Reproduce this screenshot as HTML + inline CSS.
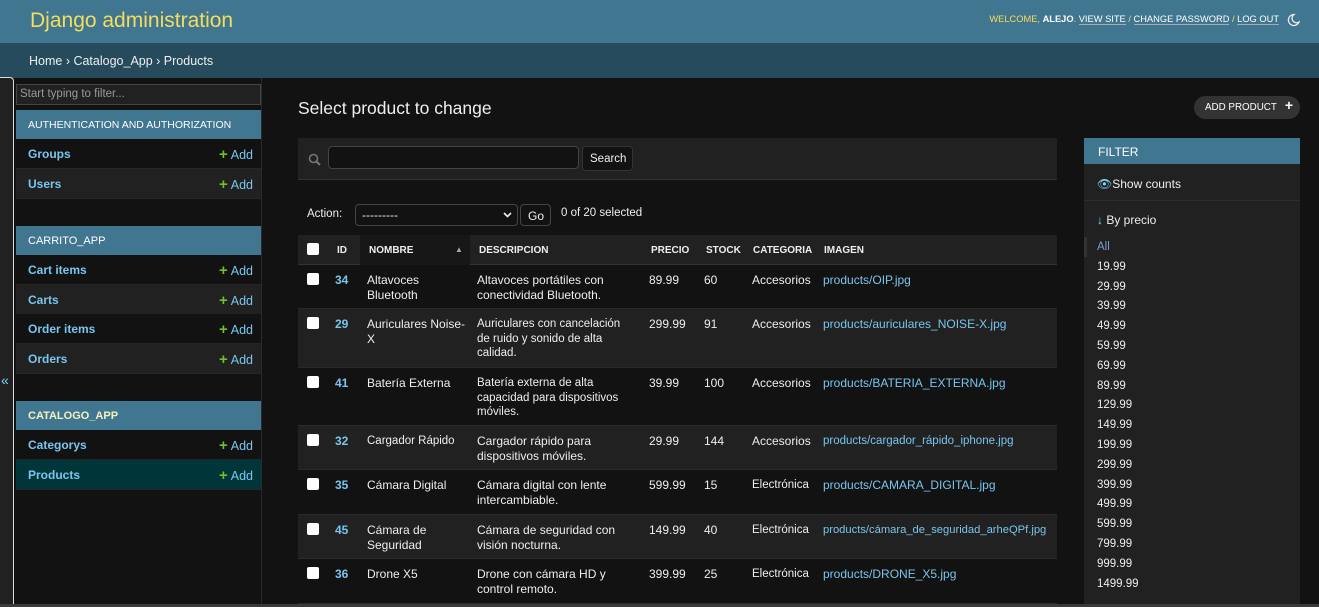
<!DOCTYPE html>
<html><head><meta charset="utf-8"><style>
*{box-sizing:border-box;margin:0;padding:0}
body{width:1319px;height:607px;overflow:hidden;background:#121212;color:#eee;font-family:"Liberation Sans",sans-serif;font-size:13px;position:relative}
.a{position:absolute;white-space:nowrap}
a,.lk{color:#79c5ee;text-decoration:none}
#hdr{left:0;top:0;width:1319px;height:43px;background:#417690}
#bc{left:0;top:43px;width:1319px;height:35px;background:#264b5d;color:#eee;font-size:12.5px;padding:11px 29px}
.cap{background:#417690;color:#fff;font-size:11px;padding:9px 12px;height:29px;width:245px;left:16px}
.mr{left:16px;width:245px;height:30px;padding:8px 12px;font-weight:bold;font-size:12px;border-bottom:1px solid #262626}
.mr .ad{position:absolute;right:8px;top:7px;font-weight:normal;color:#79c5ee;font-size:12.5px}
.mr .ad b{color:#70bf2b;font-size:15px;margin-right:3px}
.th{font-size:10px;font-weight:bold;color:#eee}
.row{left:298px;width:759px;border-bottom:1px solid #2a2a2a}
.cb{width:12px;height:12px;background:#fff;border-radius:2px}
.c{position:absolute;top:8px;line-height:14.5px;font-size:12px}
.fl{left:1097px;font-size:11.5px;color:#eee}
</style></head><body>
<div id="hdr" class="a">
 <div class="a" style="left:30px;top:9px;font-size:21px;color:#f5dd5d">Django administration</div>
 <div class="a" style="right:40px;top:14px;font-size:9.3px;color:#f5dd5d">WELCOME, <b style="color:#fff">ALEJO</b>. <span style="color:#fff;border-bottom:1px solid #aaa">VIEW SITE</span> / <span style="color:#fff;border-bottom:1px solid #aaa">CHANGE PASSWORD</span> / <span style="color:#fff;border-bottom:1px solid #aaa">LOG OUT</span></div>
 <svg class="a" style="left:1287px;top:13px" width="13" height="14" viewBox="0 0 13 14"><path d="M7 1.5A5.5 5.5 0 1 0 12 9 4.5 4.5 0 0 1 7 1.5z" fill="none" stroke="#eee" stroke-width="1.3"/></svg>
</div>
<div id="bc" class="a">Home › Catalogo_App › Products</div>
<div class="a" style="left:0;top:77px;width:14px;height:528px;background:#212121;border-right:1px solid #ddd;border-top:1px solid #ddd;border-top-right-radius:4px"></div>
<div class="a" style="left:1px;top:372px;color:#81d4fa;font-size:14px">«</div>
<div class="a" style="left:261px;top:78px;width:1px;height:529px;background:#2a2a2a"></div>
<div class="a" style="left:16px;top:84px;width:245px;height:21px;border:1px solid #444;background:#212121;color:#999;font-size:11.5px;padding:3px 3px">Start typing to filter...</div>
<div class="a cap" style="top:110px;font-size:10.5px">AUTHENTICATION AND AUTHORIZATION</div>
<div class="a mr" style="top:139px;background:#121212"><a>Groups</a><span class="ad"><b>+</b>Add</span></div>
<div class="a mr" style="top:169px;background:#212121"><a>Users</a><span class="ad"><b>+</b>Add</span></div>
<div class="a cap" style="top:226px">CARRITO_APP</div>
<div class="a mr" style="top:255px;background:#121212"><a>Cart items</a><span class="ad"><b>+</b>Add</span></div>
<div class="a mr" style="top:285px;background:#212121"><a>Carts</a><span class="ad"><b>+</b>Add</span></div>
<div class="a mr" style="top:314px;background:#121212"><a>Order items</a><span class="ad"><b>+</b>Add</span></div>
<div class="a mr" style="top:344px;background:#212121"><a>Orders</a><span class="ad"><b>+</b>Add</span></div>
<div class="a cap" style="top:401px;font-weight:bold;color:#f5f0c0">CATALOGO_APP</div>
<div class="a mr" style="top:430px;background:#121212"><a>Categorys</a><span class="ad"><b>+</b>Add</span></div>
<div class="a mr" style="top:460px;background:#00363a"><a>Products</a><span class="ad"><b>+</b>Add</span></div>
<div class="a" style="left:298px;top:98px;font-size:17.5px;color:#eee">Select product to change</div>
<div class="a" style="left:1194px;top:96px;width:106px;height:23px;background:#333;border-radius:12px;color:#fff;font-size:9.8px;padding:6px 11px">ADD PRODUCT <b style="font-size:14px;position:absolute;right:7px;top:1px">+</b></div>
<div class="a" style="left:298px;top:138px;width:759px;height:42px;background:#212121;border-bottom:1px solid #333"></div>
<svg class="a" style="left:308px;top:153px" width="13" height="13" viewBox="0 0 13 13"><circle cx="5.5" cy="5.5" r="4" fill="none" stroke="#777" stroke-width="1.6"/><path d="M8.5 8.5L12 12" stroke="#777" stroke-width="2"/></svg>
<div class="a" style="left:328px;top:146px;width:251px;height:23px;background:#121212;border:1px solid #444;border-radius:4px"></div>
<div class="a" style="left:582px;top:146px;width:51px;height:25px;background:#121212;border:1px solid #333;border-radius:4px;font-size:11.5px;padding:6px 7px">Search</div>
<div class="a" style="left:307px;top:208px;font-size:11.5px">Action:</div>
<div class="a" style="left:355px;top:204px;width:163px;height:22px;border:1px solid #444;background:#121212;border-radius:4px;font-size:12px;padding:3px 6px">---------<svg style="position:absolute;right:5px;top:7px" width="9" height="6" viewBox="0 0 9 6"><path d="M1 1l3.5 3.5L8 1" stroke="#eee" stroke-width="1.6" fill="none"/></svg></div>
<div class="a" style="left:520px;top:204px;width:31px;height:22px;border:1px solid #444;background:#121212;border-radius:4px;font-size:12px;padding:4px 7px">Go</div>
<div class="a" style="left:561px;top:207px;font-size:11.5px">0 of 20 selected</div>
<div class="a" style="left:298px;top:235px;width:759px;height:30px;background:#212121;border-bottom:1px solid #333"></div>
<div class="a" style="left:360px;top:235px;width:110px;height:30px;background:#171717"></div>
<div class="a cb" style="left:307px;top:243px"></div>
<div class="a th" style="left:337px;top:245px">ID</div>
<div class="a th" style="left:369px;top:245px">NOMBRE</div>
<div class="a" style="left:455px;top:245px;font-size:8px;color:#aaa">▲</div>
<div class="a th" style="left:479px;top:245px">DESCRIPCION</div>
<div class="a th" style="left:651px;top:245px">PRECIO</div>
<div class="a th" style="left:706px;top:245px">STOCK</div>
<div class="a th" style="left:753px;top:245px">CATEGORIA</div>
<div class="a th" style="left:824px;top:245px">IMAGEN</div>

<div class="a row" style="top:265px;height:44px;background:#121212"><div class="a cb" style="left:9px;top:8px"></div><div class="c lk" style="left:37px;font-weight:bold">34</div><div class="c" style="left:69px">Altavoces<br>Bluetooth</div><div class="c" style="left:179px">Altavoces portátiles con<br>conectividad Bluetooth.</div><div class="c" style="left:351px">89.99</div><div class="c" style="left:406px">60</div><div class="c" style="left:454px">Accesorios</div><div class="c lk" style="left:525px">products/OIP.jpg</div></div>
<div class="a row" style="top:309px;height:59px;background:#212121"><div class="a cb" style="left:9px;top:8px"></div><div class="c lk" style="left:37px;font-weight:bold">29</div><div class="c" style="left:69px">Auriculares Noise-<br>X</div><div class="c" style="left:179px;font-size:11.5px">Auriculares con cancelación<br>de ruido y sonido de alta<br>calidad.</div><div class="c" style="left:351px">299.99</div><div class="c" style="left:406px">91</div><div class="c" style="left:454px">Accesorios</div><div class="c lk" style="left:525px">products/auriculares_NOISE-X.jpg</div></div>
<div class="a row" style="top:368px;height:58px;background:#121212"><div class="a cb" style="left:9px;top:8px"></div><div class="c lk" style="left:37px;font-weight:bold">41</div><div class="c" style="left:69px">Batería Externa</div><div class="c" style="left:179px;font-size:11.5px">Batería externa de alta<br>capacidad para dispositivos<br>móviles.</div><div class="c" style="left:351px">39.99</div><div class="c" style="left:406px">100</div><div class="c" style="left:454px">Accesorios</div><div class="c lk" style="left:525px">products/BATERIA_EXTERNA.jpg</div></div>
<div class="a row" style="top:426px;height:44px;background:#212121"><div class="a cb" style="left:9px;top:8px"></div><div class="c lk" style="left:37px;font-weight:bold">32</div><div class="c" style="left:69px;font-size:11.5px">Cargador Rápido</div><div class="c" style="left:179px">Cargador rápido para<br>dispositivos móviles.</div><div class="c" style="left:351px">29.99</div><div class="c" style="left:406px">144</div><div class="c" style="left:454px">Accesorios</div><div class="c lk" style="left:525px;font-size:11.5px">products/cargador_rápido_iphone.jpg</div></div>
<div class="a row" style="top:470px;height:45px;background:#121212"><div class="a cb" style="left:9px;top:8px"></div><div class="c lk" style="left:37px;font-weight:bold">35</div><div class="c" style="left:69px">Cámara Digital</div><div class="c" style="left:179px">Cámara digital con lente<br>intercambiable.</div><div class="c" style="left:351px">599.99</div><div class="c" style="left:406px">15</div><div class="c" style="left:454px;font-size:11.5px">Electrónica</div><div class="c lk" style="left:525px">products/CAMARA_DIGITAL.jpg</div></div>
<div class="a row" style="top:515px;height:44px;background:#212121"><div class="a cb" style="left:9px;top:8px"></div><div class="c lk" style="left:37px;font-weight:bold">45</div><div class="c" style="left:69px">Cámara de<br>Seguridad</div><div class="c" style="left:179px">Cámara de seguridad con<br>visión nocturna.</div><div class="c" style="left:351px">149.99</div><div class="c" style="left:406px">40</div><div class="c" style="left:454px;font-size:11.5px">Electrónica</div><div class="c lk" style="left:525px;font-size:11.2px">products/cámara_de_seguridad_arheQPf.jpg</div></div>
<div class="a row" style="top:559px;height:45px;background:#121212"><div class="a cb" style="left:9px;top:8px"></div><div class="c lk" style="left:37px;font-weight:bold">36</div><div class="c" style="left:69px">Drone X5</div><div class="c" style="left:179px">Drone con cámara HD y<br>control remoto.</div><div class="c" style="left:351px">399.99</div><div class="c" style="left:406px">25</div><div class="c" style="left:454px;font-size:11.5px">Electrónica</div><div class="c lk" style="left:525px">products/DRONE_X5.jpg</div></div>
<div class="a" style="left:1084px;top:138px;width:216px;height:469px;background:#212121"></div>
<div class="a" style="left:1084px;top:138px;width:216px;height:26px;background:#417690;color:#fff;font-size:12px;padding:7px 14px">FILTER</div>
<div class="a" style="left:1084px;top:200px;width:216px;height:1px;background:#2c2c2c"></div>
<div class="a fl" style="top:177px;font-size:12px"><span style="color:#81d4fa">👁</span>Show counts</div>
<div class="a fl" style="top:213px;font-size:12px"><span style="color:#81d4fa">↓</span> By precio</div>
<div class="a" style="left:1084px;top:237px;width:3px;height:20px;background:#333"></div>
<div class="a fl" style="top:238px;line-height:19.8px">
<span style="color:#7a9fc8">All</span><br>19.99<br>29.99<br>39.99<br>49.99<br>59.99<br>69.99<br>89.99<br>129.99<br>149.99<br>199.99<br>299.99<br>399.99<br>499.99<br>599.99<br>799.99<br>999.99<br>1499.99</div>
<div class="a" style="left:0;top:604px;width:1319px;height:3px;background:#3a3a3a"></div>
</body></html>
